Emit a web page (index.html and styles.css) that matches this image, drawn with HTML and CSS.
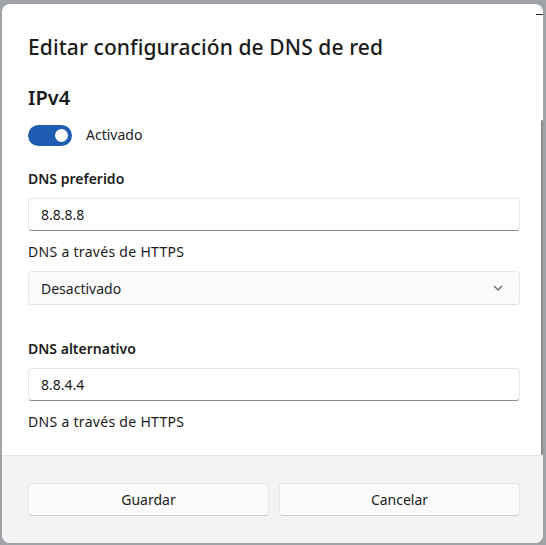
FILE: index.html
```html
<!DOCTYPE html>
<html lang="es">
<head>
<meta charset="utf-8">
<title>Editar configuración de DNS de red</title>
<link rel="stylesheet" href="styles.css">
</head>
<body>
<div class="dialog">
  <span class="behind-min"></span>
  <div class="content">
    <h1 class="title">Editar configuración de DNS de red</h1>
    <h2 class="section">IPv4</h2>
    <div class="toggle-row">
      <span class="toggle"><span class="knob"></span></span>
      <span class="toggle-label">Activado</span>
    </div>
    <div class="label strong first">DNS preferido</div>
    <div class="input">8.8.8.8</div>
    <div class="label plain">DNS a través de HTTPS</div>
    <div class="select">
      <span>Desactivado</span>
      <svg class="chev" width="10" height="6" viewBox="0 0 10 6"><path d="M1 1 L5 5 L9 1" fill="none" stroke="#5c5c5c" stroke-width="1.1"/></svg>
    </div>
    <div class="label strong second">DNS alternativo</div>
    <div class="input">8.8.4.4</div>
    <div class="label plain">DNS a través de HTTPS</div>
    <span class="scrollbar"></span>
  </div>
  <div class="footer">
    <button class="btn">Guardar</button>
    <button class="btn">Cancelar</button>
  </div>
</div>
</body>
</html>
```
FILE: styles.css
```css
html, body {
  margin: 0;
  padding: 0;
}
body {
  background: #9fa3a7;
  width: 546px;
  height: 545px;
  overflow: hidden;
  font-family: "Noto Sans", "Open Sans", sans-serif;
  color: #1b1b1b;
}
.dialog {
  position: relative;
  margin: 4px 0 0 2px;
  width: 541px;
  height: 539px;
  background: #ffffff;
  border-radius: 8px;
  overflow: hidden;
  display: flex;
  flex-direction: column;
}
.behind-min {
  position: absolute;
  right: -3px;
  top: 10px;
  width: 10px;
  height: 1px;
  background: #222;
}
.content {
  position: relative;
  height: 451px;
  padding: 29px 23px 0 26px;
  box-sizing: border-box;
  overflow: hidden;
}
.title {
  margin: 0;
  font-size: 21px;
  line-height: 28px;
  font-weight: 500;
  letter-spacing: 0.1px;
}
.section {
  margin: 23px 0 0;
  font-size: 20px;
  line-height: 28px;
  font-weight: 600;
}
.toggle-row {
  margin-top: 12px;
  height: 22px;
  display: flex;
  align-items: center;
  gap: 14px;
}
.toggle {
  width: 44px;
  height: 21px;
  border-radius: 11px;
  background: #1e5db2;
  display: flex;
  align-items: center;
  justify-content: flex-end;
  padding-right: 4px;
  box-sizing: border-box;
}
.knob {
  width: 13px;
  height: 13px;
  border-radius: 50%;
  background: #fff;
}
.toggle-label {
  font-size: 14px;
  line-height: 20px;
}
.label {
  margin-top: 11px;
  font-size: 14px;
  line-height: 20px;
}
.label.plain {
  letter-spacing: 0.3px;
}
.label.strong {
  font-weight: 600;
}
.label.first {
  margin-top: 23px;
}
.label.second {
  margin-top: 34px;
}
.input, .select {
  margin-top: 9px;
  height: 33px;
  box-sizing: border-box;
  border: 1px solid #e8e8e8;
  border-radius: 4px;
  padding: 0 12px;
  font-size: 14px;
  display: flex;
  align-items: center;
}
.input {
  background: #ffffff;
  border-bottom-color: #8a8a8a;
}
.select {
  height: 34px;
  background: #fbfbfb;
  justify-content: space-between;
  padding-right: 16px;
  border-bottom-color: #e0e0e0;
}
.chev {
  display: block;
}
.scrollbar {
  position: absolute;
  right: 0;
  top: 116px;
  bottom: 0;
  width: 2px;
  background: #8c8c8c;
  border-radius: 1px;
}
.footer {
  flex: 1;
  background: #f3f3f3;
  border-top: 1px solid #e5e5e5;
  box-sizing: border-box;
  padding: 27px 23px 0 26px;
  display: flex;
  gap: 10px;
  align-items: flex-start;
}
.btn {
  flex: 1;
  height: 33px;
  background: #fbfbfb;
  border: 1px solid #e5e5e5;
  border-bottom-color: #cccccc;
  border-radius: 4px;
  font-family: "Noto Sans", "Open Sans", sans-serif;
  font-size: 14px;
  color: #1b1b1b;
  padding: 0;
}
```
